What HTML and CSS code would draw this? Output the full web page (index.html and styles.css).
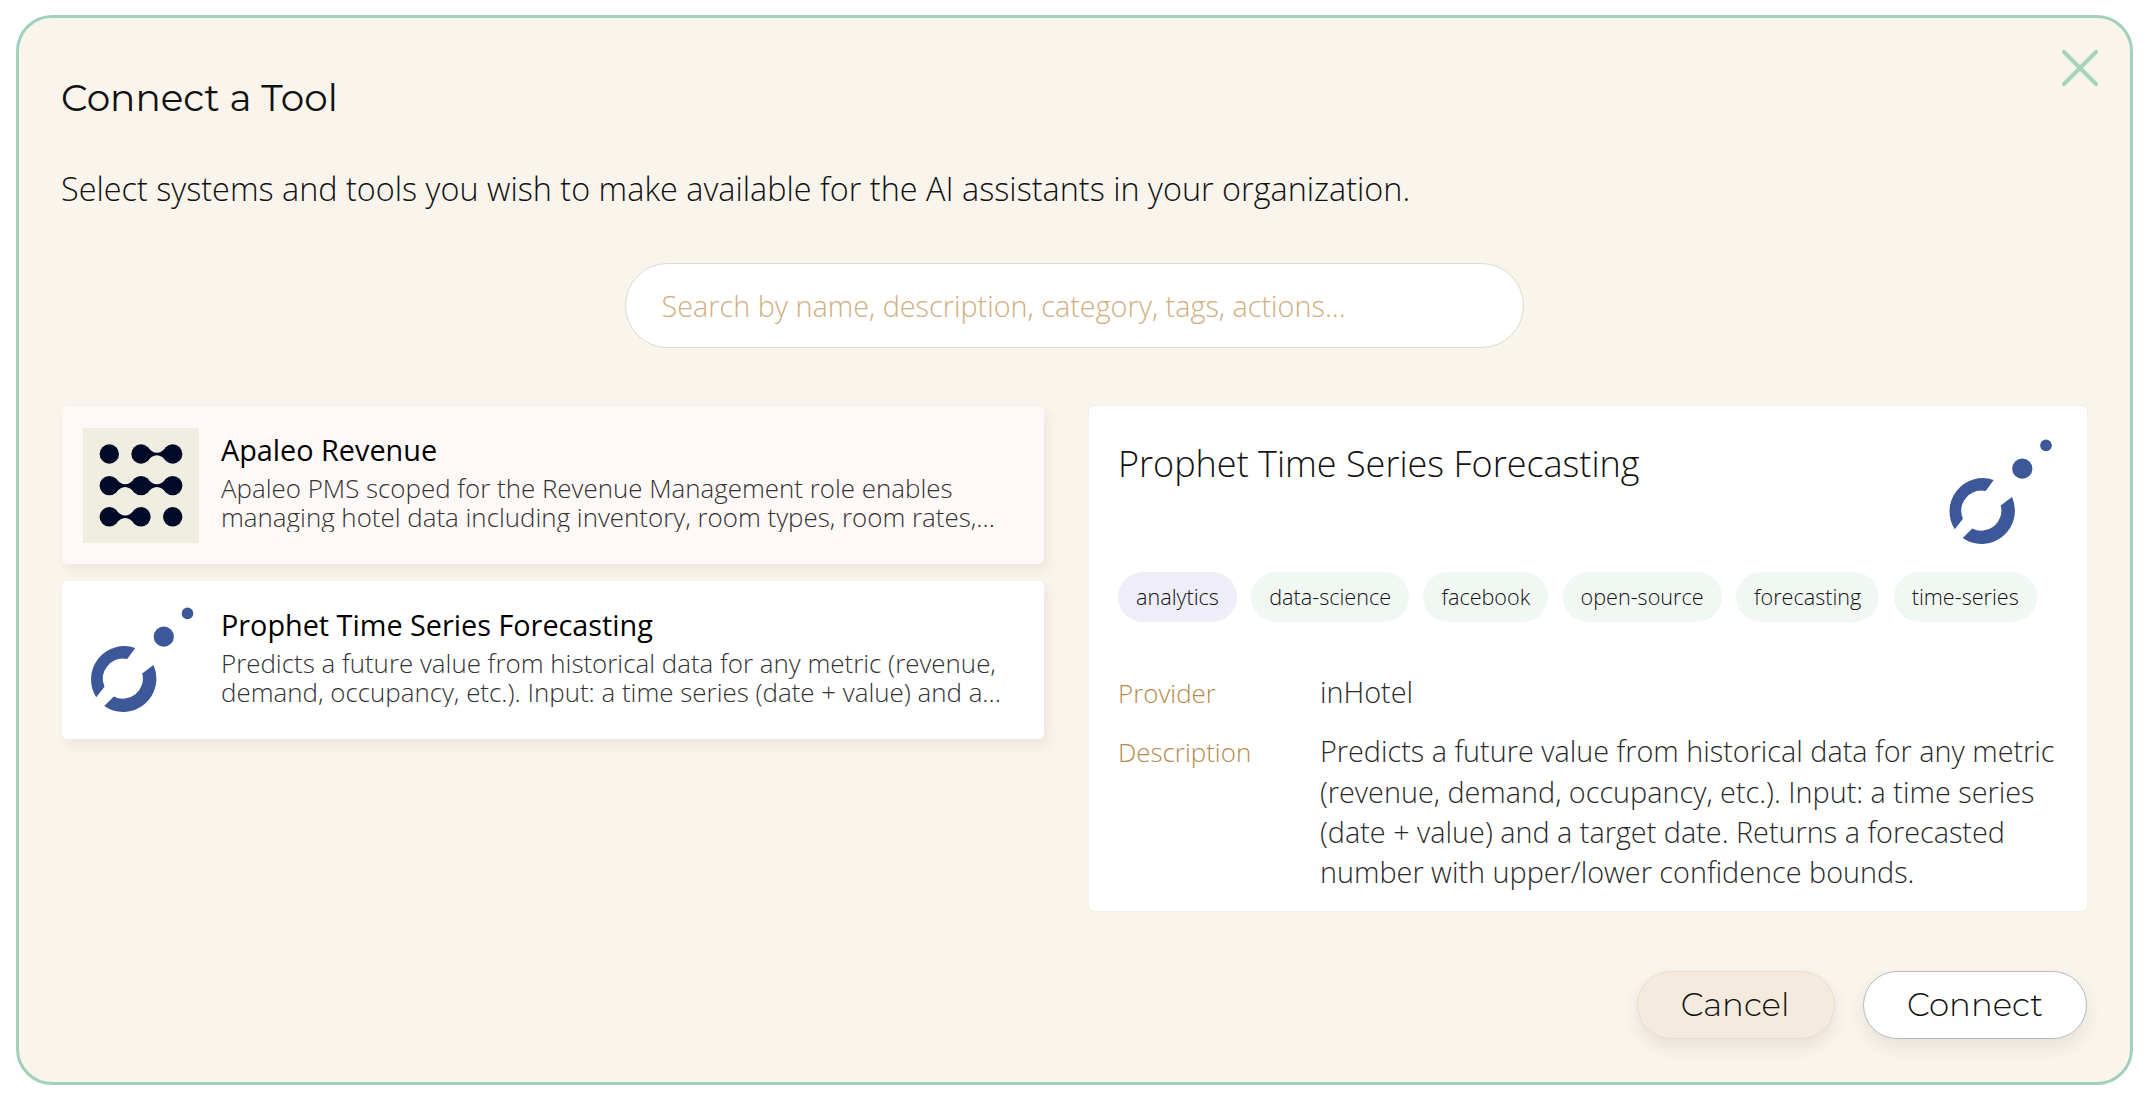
FILE: index.html
```html
<!DOCTYPE html>
<html lang="en">
  <head>
    <meta charset="UTF-8">
    <title>Connect a Tool</title>
    <link rel="stylesheet" href="styles.css">
  </head>
  <body>
    <!-- shared logo -->
    <svg class="defs" aria-hidden="true">
      <symbol id="prophet" viewBox="0 0 115 115">
        <path d="M51.7 44.9A33.3 33.3 0 0 0 12.7 94.2L21 83.7A20.3 20.3 0 0 1 43.7 55.9Z" />
        <path d="M70 62.1A33.3 33.3 0 0 1 20.7 103.1L30.3 93.5A20 20 0 0 0 58.7 70.5Z" />
        <circle cx="80.3" cy="33.7" r="10.1" />
        <circle cx="104" cy="10.4" r="5.8" />
      </symbol>
    </svg>

    <div class="dialog">
      <button class="close" aria-label="Close">
        <svg viewBox="0 0 36 36"><path d="M2 2L34 34M34 2L2 34" /></svg>
      </button>

      <h1 class="dialog-title">Connect a Tool</h1>
      <p class="dialog-text">Select systems and tools you wish to make available for the AI assistants in your organization.</p>

      <input type="text" class="search" placeholder="Search by name, description, category, tags, actions...">

      <div class="content">
        <div class="tool-list">
          <div class="tool tool-muted">
            <svg class="tool-icon apaleo" viewBox="0 0 116 115">
              <circle cx="26.3" cy="26" r="9.7" />
              <circle cx="58" cy="26" r="9.7" />
              <circle cx="89.7" cy="26" r="9.7" />
              <circle cx="26.3" cy="57.6" r="9.7" />
              <circle cx="58" cy="57.6" r="9.7" />
              <circle cx="89.7" cy="57.6" r="9.7" />
              <circle cx="26.3" cy="88.8" r="9.7" />
              <circle cx="58" cy="88.8" r="9.7" />
              <circle cx="89.7" cy="88.8" r="9.7" />
              <path d="M64 18.4Q73.9 31 83.7 18.4V33.6Q73.9 21 64 33.6Z" />
              <path d="M32.3 50Q42.2 62.6 52 50V65.2Q42.2 52.6 32.3 65.2Z" />
              <path d="M64 50Q73.9 62.6 83.7 50V65.2Q73.9 52.6 64 65.2Z" />
              <path d="M32.3 81.2Q42.2 93.8 52 81.2V96.4Q42.2 83.8 32.3 96.4Z" />
            </svg>
            <div class="tool-body">
              <h2 class="tool-name">Apaleo Revenue</h2>
              <p class="tool-desc">Apaleo PMS scoped for the Revenue Management role enables<br>managing hotel data including inventory, room types, room rates,...</p>
            </div>
          </div>
          <div class="tool">
            <svg class="tool-icon prophet"><use href="#prophet" /></svg>
            <div class="tool-body">
              <h2 class="tool-name">Prophet Time Series Forecasting</h2>
              <p class="tool-desc">Predicts a future value from historical data for any metric (revenue,<br>demand, occupancy, etc.). Input: a time series (date + value) and a...</p>
            </div>
          </div>
        </div>

        <div class="details">
          <div class="details-head">
            <h2 class="details-title">Prophet Time Series Forecasting</h2>
            <svg class="details-icon prophet"><use href="#prophet" /></svg>
          </div>
          <div class="tags">
            <span class="tag tag-category">analytics</span>
            <span class="tag">data-science</span>
            <span class="tag">facebook</span>
            <span class="tag">open-source</span>
            <span class="tag">forecasting</span>
            <span class="tag">time-series</span>
          </div>
          <dl class="info">
            <dt>Provider</dt>
            <dd>inHotel</dd>
            <dt>Description</dt>
            <dd>Predicts a future value from historical data for any metric<br>(revenue, demand, occupancy, etc.). Input: a time series<br>(date + value) and a target date. Returns a forecasted<br>number with upper/lower confidence bounds.</dd>
          </dl>
        </div>
      </div>

      <div class="actions">
        <button class="btn btn-cancel">Cancel</button>
        <button class="btn btn-connect">Connect</button>
      </div>
    </div>
  </body>
</html>
```

FILE: styles.css
```css
* {
  box-sizing: border-box;
}
body {
  margin: 0;
  padding: 15px 15px 15px 16px;
  height: 1100px;
  background-color: #fff;
  font-family: "Open Sans", "Noto Sans", sans-serif;
  font-weight: 300;
  color: #111;
}
h1, h2, p, dl, dd {
  margin: 0;
  font-weight: 300;
}
.defs {
  position: absolute;
  width: 0;
  height: 0;
}
.dialog {
  position: relative;
  width: 2117px;
  height: 1070px;
  padding: 0 43px 0 42px;
  border: 3px solid #a1d1ba;
  border-radius: 36px;
  background-color: #f9f4ec;
}
.close {
  position: absolute;
  top: 32px;
  right: 32px;
  width: 36px;
  height: 36px;
  padding: 0;
  border: none;
  background: none;
}
.close svg {
  display: block;
  fill: none;
  stroke: #a6d2be;
  stroke-width: 4;
  stroke-linecap: round;
}
.dialog-title {
  padding-top: 56px;
  font-family: Montserrat, Inter, sans-serif;
  font-size: 37.4px;
  font-weight: 400;
  line-height: 48px;
  white-space: nowrap;
}
.dialog-text {
  margin-top: 42px;
  font-size: 32.4px;
  line-height: 48px;
  white-space: nowrap;
}
.search {
  display: block;
  width: 899px;
  height: 85px;
  margin: 51px auto 0;
  padding: 0 36px;
  border: 1px solid #dcdccd;
  border-radius: 43px;
  background-color: #fff;
  font-family: inherit;
  font-size: 28.8px;
  font-weight: 300;
}
.search::placeholder {
  color: #cfae80;
  opacity: 1;
}
.content {
  display: flex;
  gap: 45px;
  margin: 58px 0 0 1px;
}
.tool-list {
  display: flex;
  flex-direction: column;
  gap: 17px;
  width: 982px;
}
.tool {
  display: flex;
  align-items: flex-start;
  gap: 22px;
  height: 158px;
  padding: 22px 21px 0;
  border-radius: 5px;
  background-color: #fff;
  box-shadow: 4px 6px 12px rgba(90, 70, 50, 0.08);
}
.tool-muted {
  background-color: #fef9f7;
}
.tool-icon {
  flex: none;
  width: 116px;
  height: 115px;
}
.apaleo {
  background-color: #f0ede1;
  fill: #010a26;
}
.prophet {
  fill: #3d5898;
}
.tool-body {
  padding-top: 3.5px;
}
.tool-name {
  font-size: 28.8px;
  font-weight: 400;
  line-height: 36px;
  color: #000;
  white-space: nowrap;
}
.tool-desc {
  height: 58px;
  margin-top: 6.5px;
  overflow: hidden;
  font-size: 25.9px;
  line-height: 29px;
  color: #333;
  white-space: nowrap;
}
.details {
  width: 998px;
  height: 505px;
  padding: 29px 29px 0;
  border-radius: 5px;
  background-color: #fff;
  box-shadow: 0 0 2px rgba(90, 70, 50, 0.1);
}
.details-head {
  display: flex;
  justify-content: space-between;
  padding-right: 1px;
}
.details-title {
  padding-top: 4px;
  font-size: 36px;
  line-height: 50px;
  white-space: nowrap;
}
.details-icon {
  width: 115px;
  height: 115px;
}
.tags {
  display: flex;
  gap: 14.4px;
  margin-top: 22px;
}
.tag {
  height: 50px;
  padding: 0 18px;
  border-radius: 25px;
  background-color: #f1f8f4;
  font-size: 21.6px;
  line-height: 50px;
  white-space: nowrap;
}
.tag-category {
  background-color: #eeedf8;
}
.info {
  display: grid;
  grid-template-columns: 202px 1fr;
  row-gap: 18px;
  margin-top: 50px;
  font-size: 28.8px;
  line-height: 40.3px;
  white-space: nowrap;
}
.info dt {
  padding-top: 1px;
  font-size: 25.9px;
  color: #b58b4c;
}
.info dd {
  color: #2a2a2a;
}
.actions {
  display: flex;
  justify-content: flex-end;
  gap: 28px;
  margin-top: 60px;
}
.btn {
  height: 68px;
  padding: 0 0 2px;
  border: 1px solid #b9bcbc;
  border-radius: 34px;
  font-family: Montserrat, Inter, sans-serif;
  font-size: 32.4px;
  font-weight: 300;
  color: #111;
  box-shadow: 0 8px 16px rgba(90, 70, 50, 0.1);
}
.btn-cancel {
  width: 198px;
  padding-right: 2px;
  border-color: #e6dfcb;
  background-color: #f4eadd;
}
.btn-connect {
  width: 224px;
  background-color: #fff;
}
```
